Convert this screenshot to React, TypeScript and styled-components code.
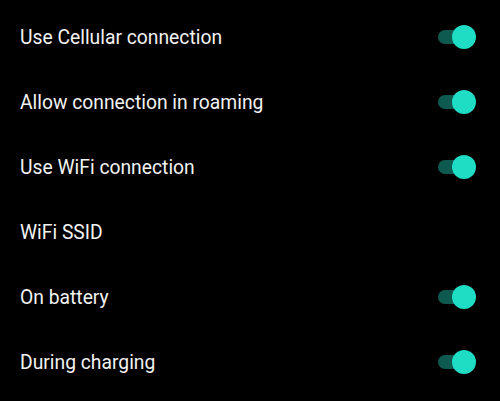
import React from "react";
import styled, { createGlobalStyle } from "styled-components";

const Global = createGlobalStyle`
  html, body { margin: 0; padding: 0; background: #000; }
  body { font-family: Roboto, "Noto Sans", sans-serif; }
`;

const List = styled.div`
  display: flex;
  flex-direction: column;
  padding-top: 5px;
  width: 500px;
  background: #000;
`;

const Row = styled.div`
  display: flex;
  align-items: center;
  justify-content: space-between;
  height: 65px;
  padding: 0 30px 0 20px;
`;

const Label = styled.span`
  color: #f2f2f2;
  font-size: 19.3px;
`;

const Switch = styled.div`
  position: relative;
  width: 32px;
  height: 14px;
  margin-top: -1px;
  border-radius: 7px;
  background: #0f5a50;
`;

const Thumb = styled.div`
  position: absolute;
  top: -5px;
  right: -6px;
  width: 24px;
  height: 24px;
  border-radius: 50%;
  background: #1fdcc5;
`;

const items: { label: string; toggle: boolean }[] = [
  { label: "Use Cellular connection", toggle: true },
  { label: "Allow connection in roaming", toggle: true },
  { label: "Use WiFi connection", toggle: true },
  { label: "WiFi SSID", toggle: false },
  { label: "On battery", toggle: true },
  { label: "During charging", toggle: true },
];

export default function App() {
  return (
    <>
      <Global />
      <List>
        {items.map((it) => (
          <Row key={it.label}>
            <Label>{it.label}</Label>
            {it.toggle && (
              <Switch>
                <Thumb />
              </Switch>
            )}
          </Row>
        ))}
      </List>
    </>
  );
}
